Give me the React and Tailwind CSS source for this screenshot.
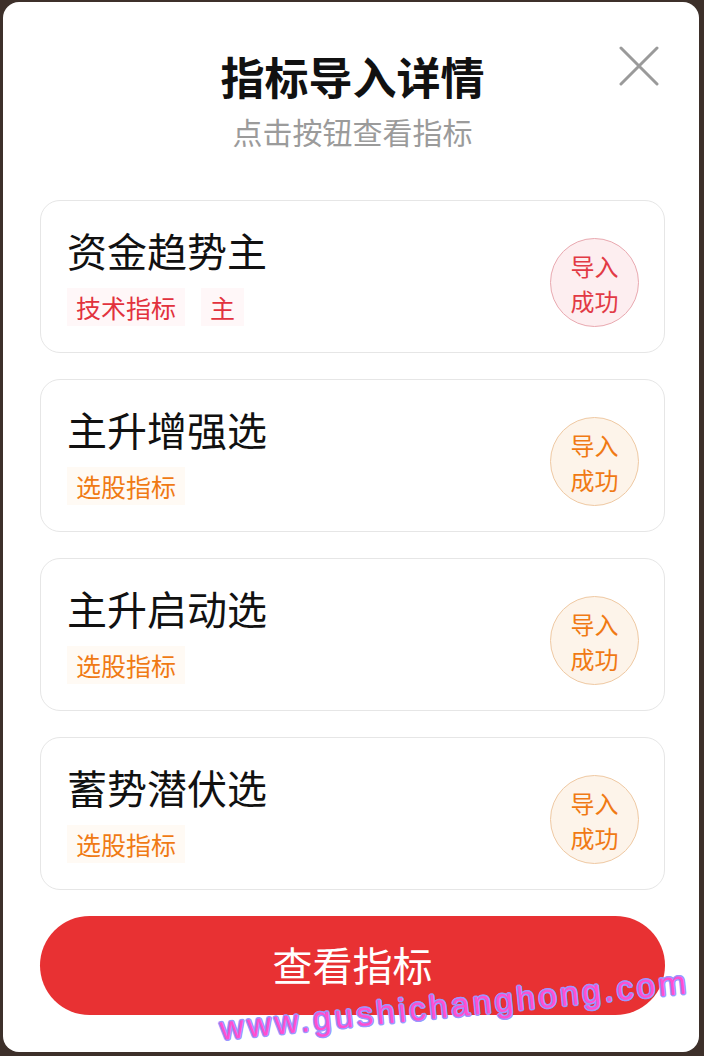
import React from 'react';

const items = [
  { name: '资金趋势主', tags: ['技术指标', '主'], tone: 'red' },
  { name: '主升增强选', tags: ['选股指标'], tone: 'orange' },
  { name: '主升启动选', tags: ['选股指标'], tone: 'orange' },
  { name: '蓄势潜伏选', tags: ['选股指标'], tone: 'orange' },
];

function Badge({ tone }) {
  const cls =
    tone === 'red'
      ? 'bg-[#fdeef0] border-[#e9a9b0] text-[#e23a45]'
      : 'bg-[#fdf4ea] border-[#efc9a3] text-[#f07a14]';
  return (
    <div
      className={`mt-[37px] flex h-[89px] w-[89px] shrink-0 flex-col items-center justify-center rounded-full border text-[24px] leading-[35px] ${cls}`}
    >
      <span>导入</span>
      <span>成功</span>
    </div>
  );
}

function Card({ item }) {
  const tagCls =
    item.tone === 'red' ? 'bg-[#fff7f8] text-[#e2323d]' : 'bg-[#fffaf4] text-[#f07a14]';
  return (
    <div className="flex h-[153px] items-start justify-between rounded-[20px] border border-[#e6e6e6] pl-[26px] pr-[25px]">
      <div className="pt-[26px]">
        <div className="text-[40px] leading-[46px] text-[#111]">{item.name}</div>
        <div className="mt-[15px] flex gap-[16px]">
          {item.tags.map((t) => (
            <span key={t} className={`h-[38px] px-[9px] text-[25px] leading-[38px] ${tagCls}`}>
              {t}
            </span>
          ))}
        </div>
      </div>
      <Badge tone={item.tone} />
    </div>
  );
}

export default function App() {
  return (
    <div
      className="h-[1056px] w-[704px] overflow-hidden bg-[#3d302a] pl-[3px] pr-[5px] pt-[2px]"
      style={{ fontFamily: '"Noto Sans CJK SC", "Noto Sans", sans-serif' }}
    >
      <div className="relative h-[1050px] rounded-[16px] bg-white pl-[37px] pr-[34px] pt-[48px]">
        {/* close */}
        <button className="absolute right-[40px] top-[44px] h-[40px] w-[40px]">
          <svg viewBox="0 0 40 40" className="h-full w-full">
            <path d="M2 2 L38 38 M38 2 L2 38" stroke="#9a9a9a" strokeWidth="3" strokeLinecap="round" />
          </svg>
        </button>

        <h1 className="text-center text-[44px] font-bold leading-[53px] text-[#111]">指标导入详情</h1>
        <p className="mt-[10px] text-center text-[30px] leading-[36px] text-[#9b9b9b]">点击按钮查看指标</p>

        <div className="mt-[51px] flex flex-col gap-[26px]">
          {items.map((it) => (
            <Card key={it.name} item={it} />
          ))}
        </div>

        <button className="mt-[26px] flex h-[99px] w-full items-center justify-center rounded-full bg-[#e83133] pb-[4px] text-[40px] text-white">
          查看指标
        </button>

        {/* watermark */}
        <div
          className="absolute left-[217px] top-[1008px] origin-left -rotate-[5.7deg] whitespace-nowrap text-[33px] leading-[38px] tracking-[3.6px] text-[#ff4fd0] [text-shadow:1.5px_0_#9a96ff,-1.5px_0_#9a96ff,0_1.5px_#9a96ff,0_-1.5px_#9a96ff,1px_1px_#9a96ff,-1px_-1px_#9a96ff,1px_-1px_#9a96ff,-1px_1px_#9a96ff]"
          style={{ fontFamily: '"Liberation Sans", sans-serif' }}
        >
          www.gushichanghong.com
        </div>
      </div>
    </div>
  );
}
